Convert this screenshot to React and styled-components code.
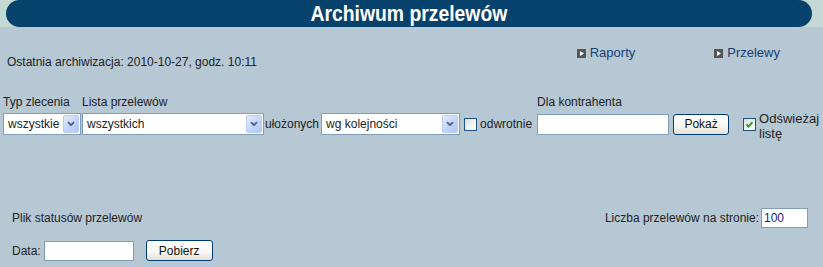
import React from 'react'
import styled, { createGlobalStyle } from 'styled-components'

const GlobalStyle = createGlobalStyle`
  body {
    margin: 0;
    background: #b7c8d5;
    font-family: "Liberation Sans", Arial, sans-serif;
    font-size: 12px;
    color: #222;
  }
`

const HeaderStrip = styled.div`
  background: #c4d9d4;
  padding: 0 11px 0 6px;
`

const HeaderBar = styled.div`
  height: 27px;
  border-radius: 14px;
  background: #07426c;
  display: flex;
  justify-content: center;
  align-items: center;
`

const Title = styled.h1`
  margin: 0;
  color: #fff;
  font-size: 22px;
  font-weight: 700;
  line-height: 27px;
  transform: scaleX(0.88);
`

const InfoRow = styled.div`
  display: flex;
  justify-content: space-between;
  align-items: flex-start;
  height: 42px;
  padding: 19px 43px 0 7px;
  box-sizing: border-box;
`

const ArchiveInfo = styled.span`
  margin-top: 9px;
  line-height: 14px;
`

const Links = styled.nav`
  display: flex;
  gap: 79px;
`

const NavLink = styled.a`
  display: flex;
  align-items: center;
  gap: 4px;
  font-size: 13px;
  line-height: 14px;
  color: #183e72;
  text-decoration: none;
  cursor: pointer;
`

const Bullet = styled.svg`
  width: 9px;
  height: 9px;
  display: block;
`

const FilterRow = styled.div`
  display: flex;
  align-items: flex-start;
  margin-top: 26px;
  padding-left: 3px;
`

const Field = styled.div`
  display: flex;
  flex-direction: column;
  flex-shrink: 0;
  margin-left: ${(p) => p.$gap || 0}px;
`

const Label = styled.label`
  height: 14px;
  line-height: 14px;
  margin-bottom: 4px;
  white-space: nowrap;
`

const Control = styled.div`
  display: flex;
  align-items: center;
  height: 22px;
`

const Select = styled.div`
  display: flex;
  align-items: center;
  flex-shrink: 0;
  width: ${(p) => p.$width}px;
  height: 22px;
  box-sizing: border-box;
  border: 1px solid #7f9db9;
  background: #fff;
  padding: 1px;
`

const SelectValue = styled.span`
  flex: 1;
  padding-left: 3px;
  white-space: nowrap;
  overflow: hidden;
`

const SelectArrow = styled.span`
  width: 16px;
  height: 18px;
  box-sizing: border-box;
  border: 1px solid #bccdf4;
  border-radius: 2px;
  background: linear-gradient(135deg, #e4ecfd 0%, #c3d4fa 55%, #b2c6f5 100%);
  display: flex;
  align-items: center;
  justify-content: center;
`

const InlineText = styled.span`
  line-height: 22px;
  margin-left: ${(p) => p.$gap || 0}px;
  white-space: nowrap;
`

const Box = styled.span`
  width: 13px;
  height: 13px;
  box-sizing: border-box;
  border: 1px solid #1c5180;
  background: linear-gradient(135deg, #dcdcd7 0%, #f4f4f2 60%, #fff 100%);
  display: flex;
  align-items: center;
  justify-content: center;
  margin-top: ${(p) => p.$top || 0}px;
  flex-shrink: 0;
`

const TextInput = styled.input`
  width: ${(p) => p.$width}px;
  height: ${(p) => p.$height || 21}px;
  flex-shrink: 0;
  box-sizing: border-box;
  border: 1px solid #7f9db9;
  background: #fff;
  padding: 0 2px;
  font: inherit;
  color: #1a1a8a;
  outline: none;
`

const Button = styled.button`
  width: ${(p) => p.$width}px;
  height: 21px;
  flex-shrink: 0;
  margin-left: ${(p) => p.$gap || 0}px;
  box-sizing: border-box;
  border: 1px solid #003c74;
  border-radius: 3px;
  background: linear-gradient(#ffffff 0%, #f7f6f1 60%, #e4e1d4 100%);
  font-family: "Liberation Sans", Arial, sans-serif;
  font-size: 12px;
  color: #111;
  padding: 0;
  cursor: pointer;
`

const RefreshToggle = styled.div`
  display: flex;
  align-items: flex-start;
  gap: 3px;
  margin-top: -2px;
`

const RefreshText = styled.span`
  line-height: 15px;
  width: 62px;
  font-size: 13px;
`

const BottomRow = styled.div`
  display: flex;
  justify-content: space-between;
  align-items: center;
  height: 21px;
  padding: 0 15px 0 12px;
  margin-top: ${(p) => p.$top}px;
`

const Group = styled.div`
  display: flex;
  align-items: center;
  gap: ${(p) => p.$gap || 0}px;
`

const Chevron = () => (
  <svg width="8" height="6" viewBox="0 0 8 6">
    <path d="M1 1.2 L4 4.2 L7 1.2" fill="none" stroke="#4d6185" strokeWidth="1.8" />
  </svg>
)

const Dropdown = ({ width, value }) => (
  <Select $width={width}>
    <SelectValue>{value}</SelectValue>
    <SelectArrow><Chevron /></SelectArrow>
  </Select>
)

const Checkbox = ({ checked, top }) => (
  <Box $top={top}>
    {checked && (
      <svg width="9" height="9" viewBox="0 0 9 9">
        <path d="M1.5 4.5 L3.5 6.6 L7.5 2.2" fill="none" stroke="#21a121" strokeWidth="1.9" />
      </svg>
    )}
  </Box>
)

const LinkItem = ({ children }) => (
  <NavLink>
    <Bullet viewBox="0 0 9 9">
      <rect width="9" height="9" fill="#555" />
      <path d="M3 2 L7 4.5 L3 7 Z" fill="#fff" />
    </Bullet>
    {children}
  </NavLink>
)

export default function App() {
  return (
    <>
      <GlobalStyle />
      <HeaderStrip>
        <HeaderBar>
          <Title>Archiwum przelewów</Title>
        </HeaderBar>
      </HeaderStrip>

      <InfoRow>
        <ArchiveInfo>Ostatnia archiwizacja: 2010-10-27, godz. 10:11</ArchiveInfo>
        <Links>
          <LinkItem>Raporty</LinkItem>
          <LinkItem>Przelewy</LinkItem>
        </Links>
      </InfoRow>

      <FilterRow>
        <Field>
          <Label>Typ zlecenia</Label>
          <Control><Dropdown width={78} value="wszystkie" /></Control>
        </Field>
        <Field $gap={1}>
          <Label>Lista przelewów</Label>
          <Control><Dropdown width={182} value="wszystkich" /></Control>
        </Field>
        <Field $gap={1}>
          <Label />
          <Control>
            <InlineText>ułożonych</InlineText>
            <InlineText $gap={2} />
            <Dropdown width={139} value="wg kolejności" />
            <InlineText $gap={4} />
            <Checkbox />
            <InlineText $gap={3}>odwrotnie</InlineText>
          </Control>
        </Field>
        <Field $gap={5}>
          <Label>Dla kontrahenta</Label>
          <Control>
            <TextInput $width={132} />
            <Button $width={56} $gap={4}>Pokaż</Button>
          </Control>
        </Field>
        <Field $gap={14}>
          <Label />
          <RefreshToggle>
            <Checkbox checked top={7} />
            <RefreshText>Odświeżaj listę</RefreshText>
          </RefreshToggle>
        </Field>
      </FilterRow>

      <BottomRow $top={66}>
        <span>Plik statusów przelewów</span>
        <Group $gap={2}>
          <span>Liczba przelewów na stronie:</span>
          <TextInput $width={47} $height={20} defaultValue="100" />
        </Group>
      </BottomRow>

      <BottomRow $top={12}>
        <Group $gap={3}>
          <span>Data:</span>
          <TextInput $width={90} $height={20} />
          <Button $width={67} $gap={9}>Pobierz</Button>
        </Group>
      </BottomRow>
    </>
  )
}
